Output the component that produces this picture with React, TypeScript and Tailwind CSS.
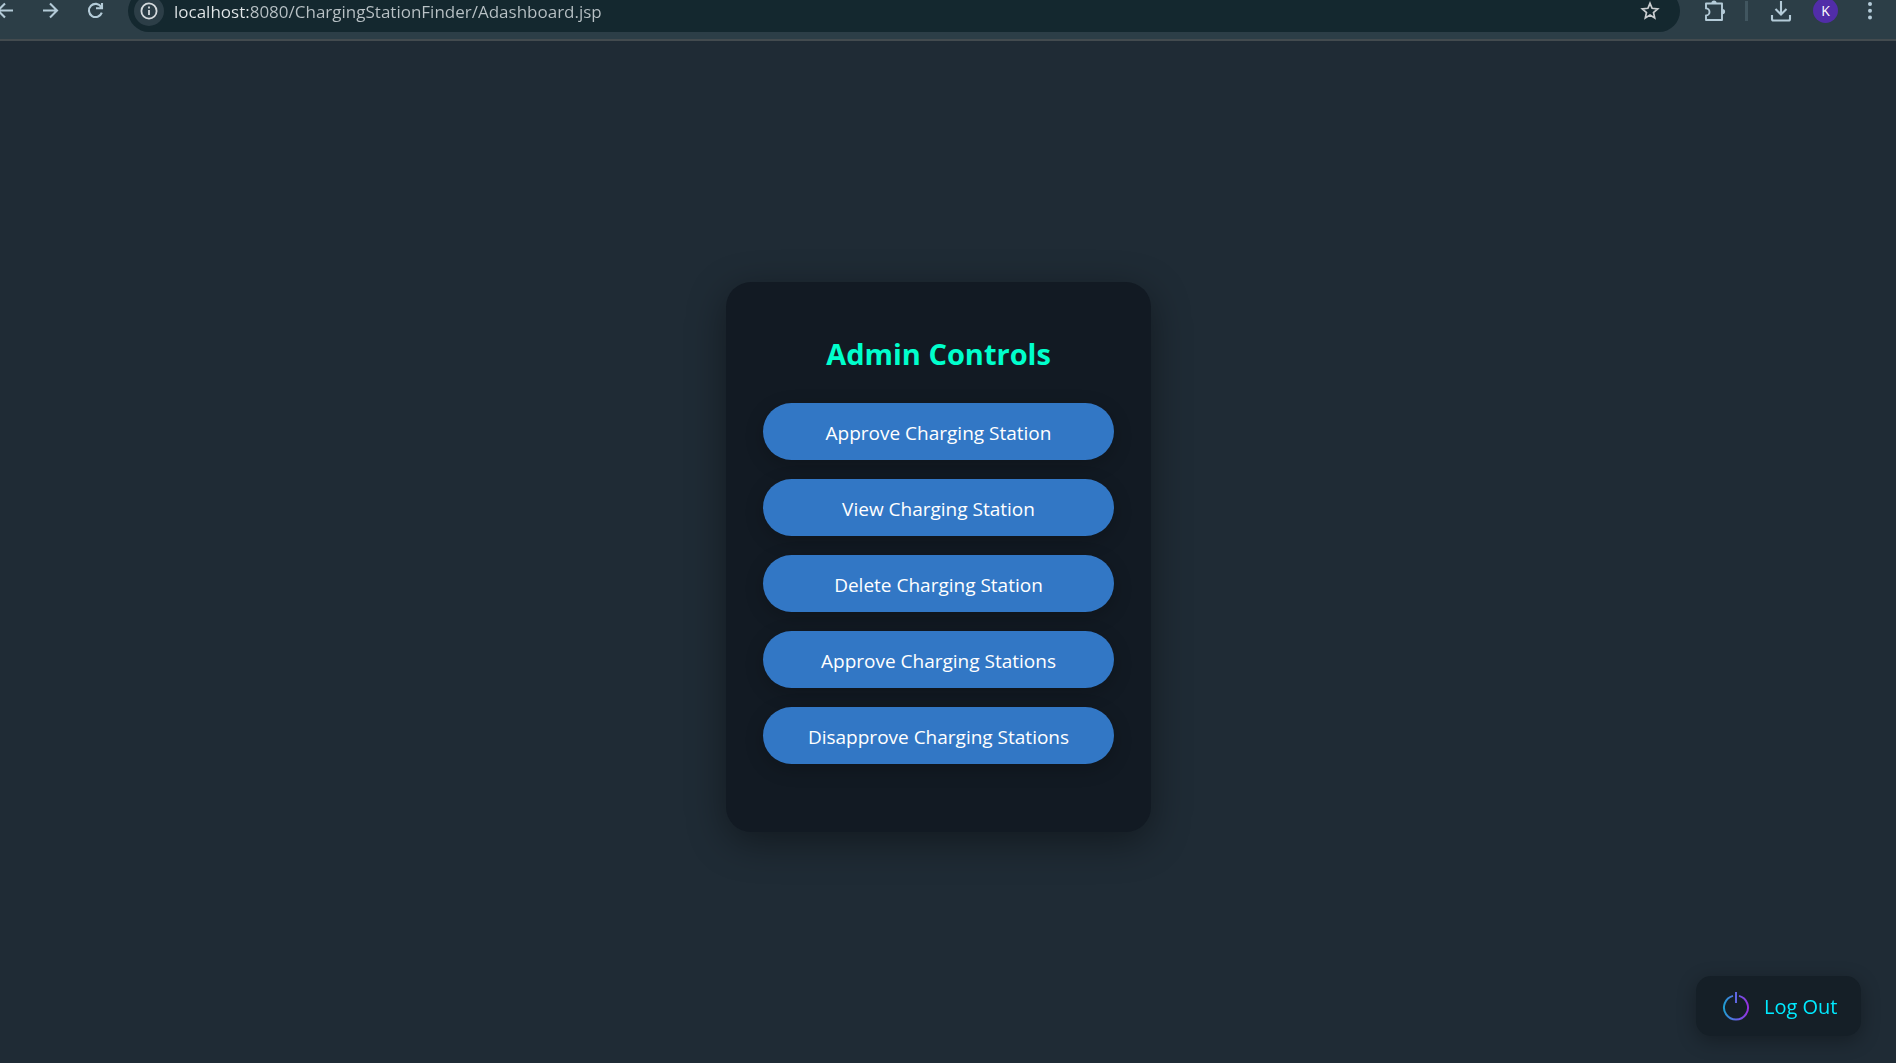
import React from "react";

const actions = [
  "Approve Charging Station",
  "View Charging Station",
  "Delete Charging Station",
  "Approve Charging Stations",
  "Disapprove Charging Stations",
];

const iconButton = "flex h-6 w-6 shrink-0 items-center justify-center text-[#b4cbd8]";

function BackIcon() {
  return (
    <svg width="24" height="24" viewBox="0 0 24 24" fill="none" stroke="currentColor" strokeWidth="2.1">
      <path d="M21 10.5H6M13 3.5l-7 7 7 7" />
    </svg>
  );
}

function ForwardIcon() {
  return (
    <svg width="24" height="24" viewBox="0 0 24 24" fill="none" stroke="currentColor" strokeWidth="2.1">
      <path d="M4 10.5h14M11 3.5l7 7-7 7" />
    </svg>
  );
}

function ReloadIcon() {
  return (
    <svg width="24" height="24" viewBox="0 0 24 24" fill="none" stroke="currentColor" strokeWidth="2.1">
      <path d="M17.2 7A6.6 6.6 0 1 0 17.8 12.6M18 3v5.3h-6" />
    </svg>
  );
}

function InfoIcon() {
  return (
    <svg width="20" height="20" viewBox="0 0 20 20" fill="none" stroke="currentColor" strokeWidth="1.8">
      <circle cx="10" cy="10" r="7.6" />
      <path d="M10 9v5M10 5.6v2" />
    </svg>
  );
}

function StarIcon() {
  return (
    <svg width="24" height="24" viewBox="0 0 24 24" fill="none" stroke="currentColor" strokeWidth="1.7">
      <path d="m12 4.3 2.1 5 5.6.5-4.2 3.7 1.2 5.4-4.7-2.8-4.7 2.8 1.2-5.4-4.2-3.7 5.6-.5z" />
    </svg>
  );
}

function PuzzleIcon() {
  return (
    <svg width="24" height="24" viewBox="0 0 24 24">
      <path
        fill="none"
        stroke="currentColor"
        strokeWidth="1.9"
        strokeLinejoin="round"
        d="M4 3.5H20V20H4V15.4A3.4 3.4 0 0 0 4 8.4z"
      />
      <path fill="currentColor" d="M9.4 3a2.6 2.6 0 0 1 5.2 0zM20.5 9a2.6 2.6 0 0 1 0 5.2z" />
    </svg>
  );
}

function DownloadIcon() {
  return (
    <svg width="24" height="24" viewBox="0 0 24 24" fill="none" stroke="currentColor" strokeWidth="2.1">
      <path d="M12 1v13.5M6.5 9l5.5 5.5L17.5 9M3 15v4a1.5 1.5 0 0 0 1.5 1.5h15A1.5 1.5 0 0 0 21 19v-4" />
    </svg>
  );
}

function MenuDots() {
  return (
    <svg width="24" height="24" viewBox="0 0 24 24" fill="currentColor">
      <circle cx="12" cy="4" r="2" />
      <circle cx="12" cy="10.8" r="2" />
      <circle cx="12" cy="17.6" r="2" />
    </svg>
  );
}

function PowerIcon() {
  return (
    <svg width="28" height="30" viewBox="0 0 28 30" fill="none" stroke="url(#power)" strokeWidth="2">
      <defs>
        <linearGradient id="power" gradientUnits="userSpaceOnUse" x1="1" y1="0" x2="27" y2="0">
          <stop offset="0" stopColor="#1ba0cf" />
          <stop offset="0.5" stopColor="#5f66e4" />
          <stop offset="1" stopColor="#9a2de0" />
        </linearGradient>
      </defs>
      <path d="M11 4.9A12 12 0 1 0 17 4.9" />
      <path fill="url(#power)" stroke="none" d="M13 1h2v11h-2z" />
    </svg>
  );
}

function Toolbar() {
  return (
    <header className="flex h-[41px] shrink-0 items-start overflow-hidden border-b-2 border-[#434b4f] bg-[#2c3e47]">
      <nav aria-label="Browser" className="flex w-32 shrink-0 gap-[21px]">
        <button aria-label="Back" className={iconButton + " -ml-2"}><BackIcon /></button>
        <button aria-label="Forward" className={iconButton + " ml-[2px]"}><ForwardIcon /></button>
        <button aria-label="Reload" className={iconButton}><ReloadIcon /></button>
      </nav>
      <div className="-mt-[10px] flex h-[42px] min-w-0 flex-1 items-center rounded-full bg-[#14282f] pr-[18px] pl-[6px]">
        <button aria-label="Site information" className="flex h-[30px] w-[30px] shrink-0 items-center justify-center rounded-full bg-[#2c3e47] text-[#d5dadd]">
          <InfoIcon />
        </button>
        <input
          aria-label="Address"
          defaultValue="localhost:8080/ChargingStationFinder/Adashboard.jsp"
          className="ml-[10px] min-w-0 flex-1 bg-[linear-gradient(90deg,#e3e8ea_76px,#b9c2c6_76px)] bg-clip-text pt-[2px] text-[17px] text-transparent outline-none"
        />
        <button aria-label="Bookmark" className="flex h-6 w-6 items-center justify-center text-[#c9cdd0]"><StarIcon /></button>
      </div>
      <div className="flex shrink-0 items-start pr-[14px] pl-[22px]">
        <button aria-label="Extensions" className={iconButton}><PuzzleIcon /></button>
        <span className="mt-px ml-[19px] h-5 w-[3px] bg-[#415660]" />
        <button aria-label="Downloads" className={iconButton + " ml-[21px]"}><DownloadIcon /></button>
        <button aria-label="Profile" className="-mt-[2px] ml-5 flex h-[25px] w-[25px] items-center justify-center rounded-full bg-[#512da8] text-[14px] text-white">K</button>
        <button aria-label="Menu" className={iconButton + " ml-5"}><MenuDots /></button>
      </div>
    </header>
  );
}

export default function App() {
  return (
    <div className="flex min-h-screen flex-col bg-[#1f2b35] font-['Open_Sans','Noto_Sans',sans-serif]">
      <Toolbar />
      <main className="flex flex-1 items-center justify-center pt-[10px] pr-[19px]">
        <section className="flex w-[425px] flex-col rounded-[25px] bg-[#121a23] px-[37px] pt-[50px] pb-[68px] shadow-[0_10px_38px_rgba(0,0,0,0.4)]">
          <h1 className="mb-[28px] pt-px text-center text-[29px] leading-[42px] font-bold text-[#00ffcc]">Admin Controls</h1>
          <div className="flex flex-col gap-[19px]">
            {actions.map((label) => (
              <button key={label} className="h-[57px] rounded-full bg-[#3277c5] pt-1 text-[19px] text-white shadow-[0_5px_19px_rgba(0,0,0,0.2)]">
                {label}
              </button>
            ))}
          </div>
        </section>
      </main>
      <a href="#logout" className="fixed right-[35px] bottom-[27px] flex h-[60px] w-[165px] items-center rounded-[15px] bg-[#151f27] pl-[26px] text-[20px] text-[#00eaff] shadow-[0_5px_19px_rgba(0,0,0,0.3)]">
        <PowerIcon />
        <span className="ml-[14px] pt-[2px]">Log Out</span>
      </a>
    </div>
  );
}
